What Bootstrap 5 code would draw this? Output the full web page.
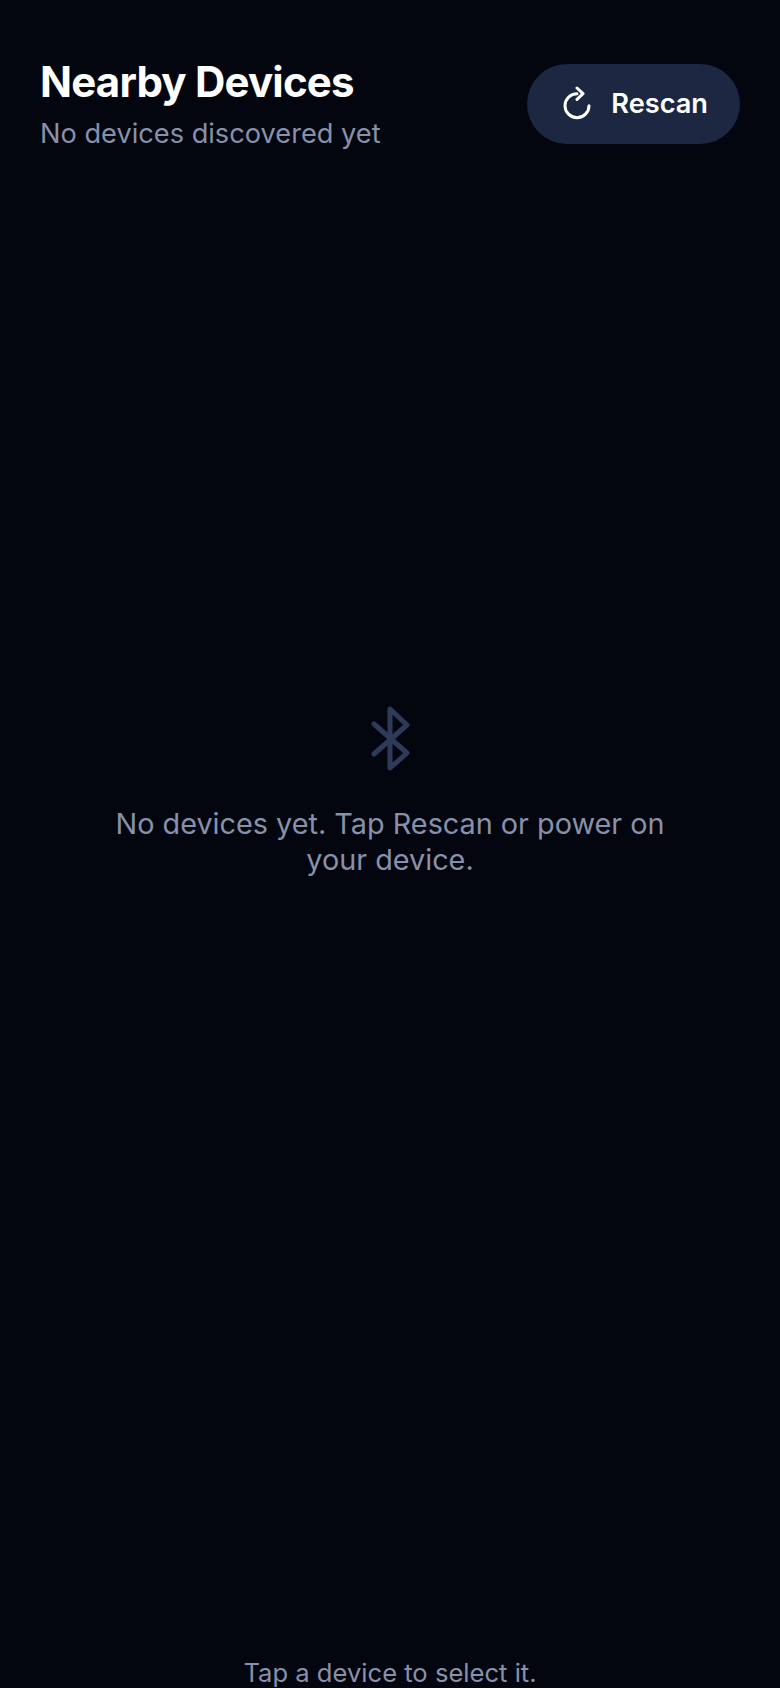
<!doctype html>
<html lang="en"><head><meta charset="utf-8">
<link href="https://cdn.jsdelivr.net/npm/bootstrap@5.3.0/dist/css/bootstrap.min.css" rel="stylesheet">
<style>
html,body{height:100%}
body{background:#03060f;font-family:Inter,"Liberation Sans",sans-serif;overflow:hidden}
.screen{height:1688px;padding:56px 40px 0}
.ttl{font-size:42px;font-weight:700;line-height:52px;letter-spacing:-.8px;color:#fff;margin:0}
.sub{font-size:27.2px;line-height:40px;color:#8891aa;margin:6px 0 0}
.rescan{height:80px;padding:0 32px;margin-top:8px;background:#1c2742;color:#fff;font-size:27.2px;font-weight:600;border:0;border-radius:40px}
.rescan svg{width:36px;height:36px;flex:none}
.mid{flex:1 1 auto;padding-bottom:227px}
.mid svg{width:40px;height:70px}
.msg{font-size:28.8px;line-height:36px;color:#8891aa;width:560px;margin:32px 0 0}
.foot{font-size:25.6px;line-height:36px;color:#8891aa;height:33px}
</style></head><body>
<div class="screen d-flex flex-column">
<header class="d-flex justify-content-between align-items-start">
<div><h1 class="ttl">Nearby Devices</h1><p class="sub">No devices discovered yet</p></div>
<button class="btn rescan d-flex align-items-center justify-content-center gap-3" type="button">
<svg viewBox="0 0 36 36" fill="none" stroke="#fff" stroke-width="3" stroke-linecap="round" stroke-linejoin="round"><path d="M18 7.7A12 12 0 1 0 30 19.7"/><path d="M18 2l6 5.7-6 5.7"/></svg>Rescan</button>
</header>
<main class="mid d-flex flex-column align-items-center justify-content-center text-center">
<svg viewBox="0 0 40 70" fill="none" stroke="#2e3b58" stroke-width="5" stroke-linecap="round" stroke-linejoin="round"><path d="M4 20l33 29-17 15V5l17 16L4 50"/></svg>
<p class="msg">No devices yet. Tap Rescan or power on your device.</p>
</main>
<footer class="foot text-center">Tap a device to select it.</footer>
</div>
<script src="https://cdn.jsdelivr.net/npm/bootstrap@5.3.0/dist/js/bootstrap.bundle.min.js"></script>
</body></html>
